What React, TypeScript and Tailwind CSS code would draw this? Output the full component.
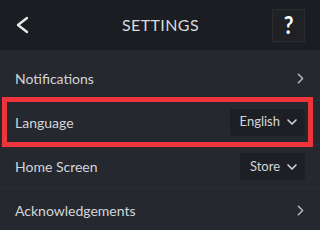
import { ChevronRight, ChevronDown } from 'lucide-react';

function Dropdown({ label }: { label: string }) {
  return (
    <div className="flex h-[27px] items-center gap-[4px] rounded-[3px] bg-[#1d1f24] pl-[10px] pr-[5px] text-[13px] text-[#d3d6d9]">
      <span>{label}</span>
      <ChevronDown className="h-[16px] w-[16px]" strokeWidth={2.4} />
    </div>
  );
}

function Row({ label, children, highlight }: { label: string; children: React.ReactNode; highlight?: boolean }) {
  return (
    <div className="flex h-[44px] flex-col border-b border-[#2a2d33]">
      <div
        className={
          highlight
            ? 'ml-[2px] mr-[7px] -mt-[4px] flex h-[50px] shrink-0 items-center justify-between border-[5px] border-[#f0343c] pl-[8px] pr-[3px]'
            : 'flex h-full items-center justify-between pl-[15px] pr-[15px]'
        }
      >
        <span className="text-[14px] text-[#d3d6d9]">{label}</span>
        {children}
      </div>
    </div>
  );
}

export default function App() {
  return (
    <div className="h-[230px] w-[320px] overflow-hidden bg-[#25282e] font-['Lato',sans-serif]">
      <div className="grid h-[50px] grid-cols-[1fr_auto_1fr] items-center bg-[#1b1d22] pl-[16px] pr-[15px]">
        <svg width="14" height="18" viewBox="0 0 14 18" fill="none">
          <polyline points="11,2 2,9 11,16" stroke="#e6e7e8" strokeWidth="2.4" strokeLinecap="round" strokeLinejoin="round" />
        </svg>
        <h1 className="text-[16px] tracking-[0.4px] text-[#d9dbdd]">SETTINGS</h1>
        <div className="flex h-[33px] w-[33px] items-center justify-center justify-self-end border border-[#2b2d31] bg-[#1f2125] text-[25px] font-bold text-white">
          <span className="scale-x-[0.85]">?</span>
        </div>
      </div>
      <div className="pt-[7px]">
        <Row label="Notifications">
          <ChevronRight className="-mr-[4px] h-[17px] w-[17px] text-[#b4b7bb]" strokeWidth={2.2} />
        </Row>
        <Row label="Language" highlight>
          <Dropdown label="English" />
        </Row>
        <Row label="Home Screen">
          <Dropdown label="Store" />
        </Row>
        <Row label="Acknowledgements">
          <ChevronRight className="-mr-[4px] h-[17px] w-[17px] text-[#b4b7bb]" strokeWidth={2.2} />
        </Row>
      </div>
    </div>
  );
}
